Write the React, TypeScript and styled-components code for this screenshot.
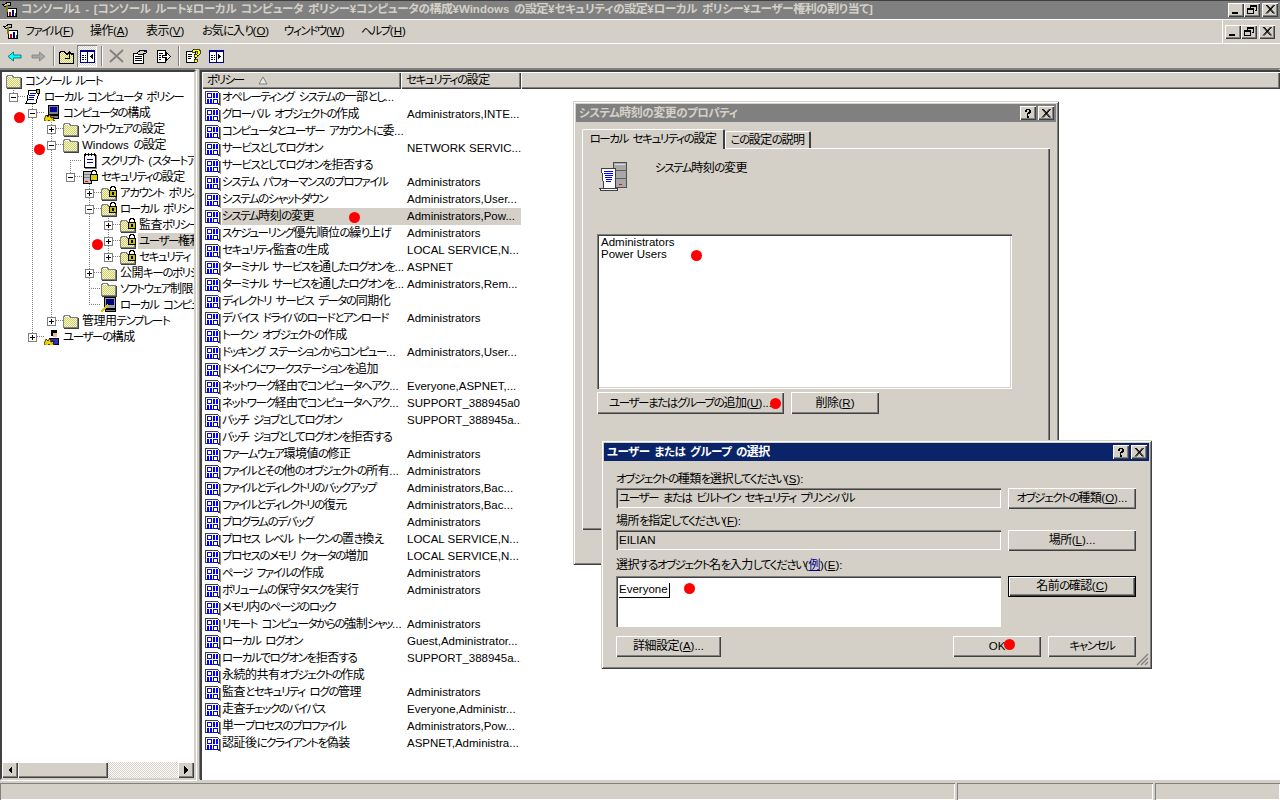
import React from "react";
import styled, { createGlobalStyle, css } from "styled-components";

const Global = createGlobalStyle`
  html, body { margin: 0; padding: 0; background: #d4d0c8; }
  * { box-sizing: border-box; }
  body { font: 11.5px/1 "Liberation Sans", "Noto Sans CJK JP", sans-serif; font-feature-settings: "palt"; color: #000; overflow: hidden; letter-spacing: -1.4px; }
`;

const raised = css`
  box-shadow: inset 1px 1px #fff, inset -1px -1px #404040, inset -2px -2px #808080;
`;
const sunken = css`
  box-shadow: inset 1px 1px #808080, inset -1px -1px #fff;
`;

const Kanji = styled.span`
  font-size: 12px; letter-spacing: -0.5px;
`;
const Latin = styled.span`
  font-size: 11.5px; letter-spacing: 0; white-space: pre; word-spacing: 1.5px;
`;
const T = ({ s }: { s: string }) => (
  <>
    {s.split(/([\u3400-\u9fff々]+|[\x00-\x7f¥]+)/).filter(Boolean).map((p, i) =>
      /^[\u3400-\u9fff々]/.test(p) ? <Kanji key={i}>{p}</Kanji>
        : /^[\x00-\x7f¥]/.test(p) ? <Latin key={i}>{p}</Latin>
          : <React.Fragment key={i}>{p}</React.Fragment>
    )}
  </>
);

const Screen = styled.div`
  position: relative; width: 1280px; height: 800px; display: flex; flex-direction: column;
  background: #d4d0c8; overflow: hidden;
`;
const TitleBar = styled.div`
  height: 19px; flex: none; background: #808080; border-top: 1px solid #404040; display: flex; align-items: center;
  padding: 0 2px 1px 2px; color: #d4d0c8; font-weight: 700; white-space: nowrap; letter-spacing: -.3px;
`;
const TitleText = styled.span`
  margin-left: 3px; flex: 1; overflow: hidden;
`;
const Controls = styled.div`
  display: flex; flex: none; align-items: center;
`;
const CapBtn = styled.div<{ $gap?: number }>`
  width: 16px; height: 14px; background: #d4d0c8; ${raised}; display: flex; align-items: center; justify-content: center;
  margin-left: ${p => p.$gap ?? 0}px;
`;
const MenuBar = styled.div`
  height: 25px; flex: none; display: flex; align-items: center; border-top: 1px solid #fff; border-bottom: 1px solid #fff; padding-left: 3px; padding-right: 5px;
`;
const MenuItems = styled.div`
  flex: 1; display: flex; align-items: center; height: 100%; border-right: 1px solid #fff; margin-right: 2px; padding-left: 6px;
`;
const MenuItem = styled.span<{ $w: number }>`
  width: ${p => p.$w}px; white-space: nowrap; flex: none;
`;
const Acc = styled.span`
  text-decoration: underline; letter-spacing: 0;
`;
const ToolBar = styled.div`
  height: 25px; flex: none; display: flex; align-items: center; padding-left: 4px; border-bottom: 1px solid #808080;
`;
const Tool = styled.div<{ $pressed?: boolean; $gap?: number }>`
  width: 20px; height: 22px; display: flex; align-items: center; justify-content: center; flex: none; margin-left: ${p => p.$gap ?? 0}px;
  ${p => p.$pressed && css`
    background: repeating-conic-gradient(#fff 0 25%, #d4d0c8 0 50%) 0 0 / 2px 2px;
    box-shadow: inset 1px 1px #808080, inset -1px -1px #fff;
  `}
`;
const ToolSep = styled.div<{ $l: number; $r: number }>`
  width: 2px; height: 20px; flex: none; margin: 0 ${p => p.$r}px 0 ${p => p.$l}px; border-left: 1px solid #808080; border-right: 1px solid #fff;
`;
const Panes = styled.div`
  flex: 1; min-height: 0; display: flex; gap: 4px; padding-top: 1px;
`;
const TreePane = styled.div`
  position: relative; width: 196px; flex: none; display: flex; flex-direction: column; background: #fff;
  border-top: 2px solid #404040; border-left: 2px solid #404040; border-right: 2px solid #d4d0c8; border-bottom: 2px solid #d4d0c8;
  box-shadow: 1px 1px #fff, -1px -1px #808080;
`;
const TreeBody = styled.div`
  position: relative; flex: 1; min-height: 0; overflow: hidden; padding-top: 1px;
`;
const TreeLines = styled.svg`
  position: absolute; left: 0; top: 0; pointer-events: none;
`;
const TreeRow = styled.div<{ $pad: number }>`
  position: relative; height: 16px; display: flex; align-items: center; padding-left: ${p => p.$pad}px; white-space: nowrap;
`;
const Expander = styled.div<{ $hidden?: boolean }>`
  width: 9px; height: 9px; flex: none; margin-right: 7px; visibility: ${p => (p.$hidden ? "hidden" : "visible")};
  border: 1px solid #808080; background: #fff; display: flex; align-items: center; justify-content: center;
`;
const TreeLabel = styled.span<{ $selected?: boolean }>`
  margin-left: 2px; padding: 2px 1px; flex: 1; line-height: 12px; overflow: hidden;
  background: ${p => (p.$selected ? "#d4d0c8" : "transparent")};
`;
const HScroll = styled.div`
  height: 16px; flex: none; display: flex; background: repeating-conic-gradient(#fff 0 25%, #d4d0c8 0 50%) 0 0 / 2px 2px;
`;
const ScrollBtn = styled.div`
  width: 16px; flex: none; background: #d4d0c8; ${raised}; display: flex; align-items: center; justify-content: center;
`;
const ScrollThumb = styled.div`
  width: 90px; flex: none; background: #d4d0c8; ${raised}; margin-right: auto;
`;
const ListPane = styled.div`
  flex: 1; min-width: 0; background: #fff; border-top: 2px solid #404040; border-left: 2px solid #404040; box-shadow: -1px -1px #808080;
  overflow: hidden;
`;
const Header = styled.div`
  display: flex; height: 17px; background: #d4d0c8;
`;
const HeadCell = styled.div<{ $w?: number }>`
  ${p => (p.$w ? `width:${p.$w}px;flex:none;` : "flex:1;")}
  ${raised}; padding-left: 5px; display: flex; align-items: center; white-space: nowrap;
`;
const SortMark = styled.svg`
  margin-left: 14px;
`;
const ListRow = styled.div`
  height: 17px; display: flex; align-items: center; padding-left: 3px;
`;
const ListBody = styled.div<{ $selected?: boolean }>`
  margin-left: 1px; width: 299px; height: 17px; display: grid; grid-template-columns: 179px 120px; align-items: center; white-space: nowrap;
  background: ${p => (p.$selected ? "#d4d0c8" : "transparent")};
`;
const Cell2 = styled.span`
  padding-left: 6px; letter-spacing: 0; overflow: hidden;
`;
const NameCell = styled.span`
  overflow: visible;
`;
const StatusBar = styled.div`
  height: 20px; flex: none; display: flex; gap: 2px; padding-top: 3px;
`;
const StatusCell = styled.div<{ $w?: number }>`
  ${p => (p.$w ? `width:${p.$w}px;flex:none;` : "flex:1;")}
  ${sunken};
`;

const Win = styled.div<{ $x: number; $y: number; $w: number; $h: number }>`
  position: absolute; left: ${p => p.$x}px; top: ${p => p.$y}px; width: ${p => p.$w}px; height: ${p => p.$h}px;
  background: #d4d0c8; padding: 3px; display: flex; flex-direction: column;
  box-shadow: inset 1px 1px #d4d0c8, inset -1px -1px #404040, inset 2px 2px #fff, inset -2px -2px #808080;
`;
const WinTitle = styled.div<{ $active?: boolean }>`
  height: 18px; flex: none; display: flex; align-items: center; padding: 0 2px 0 3px; font-weight: 700; white-space: nowrap; letter-spacing: -.5px;
  background: ${p => (p.$active ? "#0a246a" : "#808080")}; color: ${p => (p.$active ? "#fff" : "#d4d0c8")};
`;
const WinTitleText = styled.span`
  flex: 1;
`;
const TabStrip = styled.div`
  display: flex; align-items: flex-end; height: 23px; flex: none; margin: 3px 0 0 6px;
`;
const Tab = styled.div<{ $active?: boolean; $w: number }>`
  width: ${p => p.$w}px; height: ${p => (p.$active ? 20 : 17)}px; display: flex; align-items: center; justify-content: center; position: relative; z-index: ${p => (p.$active ? 1 : 0)};
  background: #d4d0c8; border-top: 1px solid #fff; border-left: 1px solid #fff; border-right: 2px solid #404040; border-top-left-radius: 2px; border-top-right-radius: 2px;
  ${p => p.$active && "margin-bottom:-1px;"}
  white-space: nowrap;
`;
const TabPanel = styled.div`
  width: 468px; height: 382px; flex: none; margin-left: 6px; padding: 12px 15px; ${raised};
  display: flex; flex-direction: column;
`;
const PolicyHead = styled.div`
  height: 74px; flex: none; display: flex; align-items: flex-start; padding-left: 1px; gap: 25px;
`;
const PolicyName = styled.span`
  margin-top: 2px;
`;
const ListBox = styled.div`
  width: 415px; height: 155px; flex: none; background: #fff; padding: 2px 4px; letter-spacing: 0; line-height: 12px;
  box-shadow: inset 1px 1px #808080, inset 2px 2px #404040, inset -1px -1px #fff, inset -2px -2px #d4d0c8;
`;
const BtnRow = styled.div`
  display: flex; gap: 7px; margin-top: 3px;
`;
const Btn = styled.div<{ $w: number; $h?: number; $default?: boolean }>`
  width: ${p => p.$w}px; height: ${p => p.$h ?? 21}px; flex: none; display: flex; align-items: center; justify-content: center; white-space: pre; background: #d4d0c8;
  ${raised};
  ${p => p.$default && css`
    border: 1px solid #000;
  `}
`;
const Form = styled.div`
  flex: 1; display: grid; grid-template-columns: 385px 128px; column-gap: 7px; padding: 10px 0 0 12px; align-content: start;
`;
const FieldLabel = styled.label<{ $h?: number }>`
  grid-column: 1 / 3; height: ${p => p.$h ?? 17}px; display: flex; align-items: center; white-space: pre;
`;
const Field = styled.div<{ $h?: number; $white?: boolean }>`
  height: ${p => p.$h ?? 20}px; background: ${p => (p.$white ? "#fff" : "#d4d0c8")}; padding: 5px 3px 3px; white-space: pre;
  box-shadow: inset 1px 1px #808080, inset 2px 2px #404040, inset -1px -1px #fff;
  margin-bottom: 5px;
`;
const Typed = styled.span`
  display: inline-block; margin-top: 2px; padding: 1px 1px 1px 0; border-bottom: 1px solid #000; border-right: 1px solid #000; letter-spacing: 0;
`;
const LinkText = styled.span`
  color: #000080; text-decoration: underline;
`;
const WinFooter = styled.div`
  display: flex; grid-column: 1 / 3; margin-top: 4px; gap: 7px;
`;
const Spacer = styled.div`
  flex: 1;
`;
const Grip = styled.svg`
  position: absolute; right: 3px; bottom: 3px;
`;
const Dot = styled.div<{ $x: number; $y: number }>`
  position: absolute; left: ${p => p.$x - 5.5}px; top: ${p => p.$y - 5.5}px; width: 11px; height: 11px; border-radius: 50%; background: #f00; z-index: 5;
`;
const Defs = styled.svg`
  position: absolute; width: 0; height: 0;
`;

type SP = React.SVGProps<SVGSVGElement>;
const Ic = ({ w = 16, h = 16, children, ...r }: SP & { w?: number; h?: number }) => (
  <svg width={w} height={h} viewBox={`0 0 ${w} ${h}`} shapeRendering="crispEdges" style={{ flex: "none", display: "block" }} {...r}>{children}</svg>
);

const FolderIc = () => (
  <Ic>
    <path d="M.5 3.5h1v-1h5v1h1v1h7v10H.5z" fill="url(#dither)" stroke="#808080" />
    <path d="M15.5 5v10.5H1" fill="none" stroke="#404040" />
    <path d="M2 3.5h4" stroke="#fff" />
  </Ic>
);
const LockFolderIc = () => (
  <Ic>
    <path d="M.5 4.5h1v-1h5v1h1v1h7v9H.5z" fill="url(#dither)" stroke="#808080" />
    <path d="M15.5 6v9.5H1" fill="none" stroke="#404040" />
    <path d="M9.5 5V2.5h1v-1h3v1h1V5" fill="none" stroke="#000" />
    <rect x="8.5" y="5.5" width="7" height="6" fill="#c8c000" stroke="#000" />
    <rect x="11" y="7" width="2" height="3" fill="#000" />
  </Ic>
);
const PolicyIc = () => (
  <Ic>
    <path d="M.5 1.5h12l2 2v11l-2-1H.5z" fill="#fff" stroke="#404040" />
    <path d="M15.5 3v13H13" fill="none" stroke="#909090" />
    <path fill="#0000ff" d="M2 3h5v5H2zM8 3h2v5H8zM11 3h2v5h-2zM2 9h2v5H2zM5 9h2v5H5zM8 9h5v5H8z" />
    <path fill="#fff" d="M3 4h3v3H3zM9 10h3v3H9z" />
  </Ic>
);
const RootPolicyIc = () => (
  <Ic>
    <path d="M4 1h9l1 2-3 11H1l1-2z" fill="#fff" stroke="#000" />
    <path d="M5 4h6M4 6h6M4 8h5M3 10h6" stroke="#0000c0" />
    <path d="M11 0h3v4h-2z" fill="#c0c000" stroke="#000" />
  </Ic>
);
const ComputerIc = () => (
  <Ic>
    <rect x="4.5" y=".5" width="10" height="9" fill="#808080" stroke="#000" />
    <rect x="6" y="2" width="7" height="5" fill="#0000a0" />
    <rect x="3.5" y="10.5" width="11" height="3" fill="#808080" stroke="#000" />
    <path d="M0 15l2-5 2 2 2-3 1 4 3-1-1 3 2 1-5 1-1-2-2 2z" fill="#f0d000" stroke="#000" strokeWidth=".7" shapeRendering="auto" />
  </Ic>
);
const UserIc = () => (
  <Ic>
    <circle cx="10" cy="4" r="3.5" fill="#000" />
    <rect x="9" y="4" width="4" height="4" fill="#e8b890" />
    <path d="M5.5 15.5v-6h9v6z" fill="#3030c0" stroke="#000" />
    <path d="M0 15l2-5 2 2 2-3 1 4 3-1-1 3 2 1-5 1-1-2-2 2z" fill="#f0d000" stroke="#000" strokeWidth=".7" shapeRendering="auto" />
  </Ic>
);
const ScriptIc = () => (
  <Ic>
    <path d="M2.5 1.5h11v13h-11z" fill="#fff" stroke="#000" />
    <path d="M3 0v3M6 0v3M9 0v3M12 0v3" stroke="#000" />
    <path d="M5 6h6M5 9h6" stroke="#0000c0" />
    <path d="M14.5 2v13.5H3" fill="none" stroke="#808080" />
  </Ic>
);
const SecurityIc = () => (
  <Ic>
    <rect x="1.5" y="2.5" width="8" height="12" fill="#c0c0c0" stroke="#000" />
    <path d="M2 5h7M2 8h7" stroke="#808080" />
    <rect x="3" y="12" width="3" height="1" fill="#f00" />
    <path d="M9.5 5V2.5h1v-1h3v1h1V5" fill="none" stroke="#000" />
    <rect x="8.5" y="5.5" width="7" height="6" fill="#e0d000" stroke="#000" />
  </Ic>
);
const LocalPcIc = () => (
  <Ic>
    <rect x="3.5" y=".5" width="11" height="11" fill="#a0a0a0" stroke="#000" />
    <rect x="5" y="2" width="8" height="6" fill="#000080" />
    <rect x="4.5" y="12.5" width="10" height="2" fill="#808080" stroke="#000" />
    <path d="M0 15l7-7" stroke="#e0c000" strokeWidth="2" />
  </Ic>
);
const MmcIc = () => (
  <Ic>
    <rect x="5.5" y="6.5" width="9" height="8" fill="#fff" stroke="#000" />
    <rect x="7" y="10" width="2" height="4" fill="#c00000" />
    <rect x="10" y="8" width="2" height="6" fill="#000080" />
    <rect x="13" y="11" width="1" height="3" fill="#008000" />
    <path d="M0 2h3l3-2h2v3H5l-2 2z" fill="#c0c0c0" stroke="#000" />
    <path d="M5 3v7" stroke="#808000" strokeWidth="2" />
  </Ic>
);
const Plus = ({ open }: { open?: boolean }) => (
  <Ic w={7} h={7}>
    <path d="M1 3.5h5" stroke="#000" />
    {!open && <path d="M3.5 1v5" stroke="#000" />}
  </Ic>
);
const MinGlyph = () => <Ic w={10} h={9}><rect x="1" y="7" width="6" height="2" fill="#000" /></Ic>;
const RestoreGlyph = () => (
  <Ic w={10} h={9}>
    <path d="M3.5 2.5V.5h6v5H7.5" fill="none" stroke="#000" />
    <path d="M3 1h7" stroke="#000" />
    <rect x=".5" y="3.5" width="6" height="5" fill="none" stroke="#000" />
    <path d="M0 4h7" stroke="#000" />
  </Ic>
);
const CloseGlyph = () => (
  <Ic w={10} h={9}>
    <path d="M1 0l7.5 8.5M2.2 0l7.5 8.5M8.5 0L1 8.5M9.7 0L2.2 8.5" stroke="#000" shapeRendering="auto" />
  </Ic>
);
const HelpGlyph = () => (
  <Ic w={8} h={9}>
    <path d="M1 2V1h1V0h4v1h1v3H6v1H4v2H3V4h1V3h1V1H3v2H1zM3 7h2v2H3z" fill="#000" />
  </Ic>
);
const Arrow = ({ left }: { left?: boolean }) => (
  <Ic w={6} h={8}><path d={left ? "M5 0v8L1 4z" : "M1 0v8l4-4z"} fill="#000" /></Ic>
);
const BackIc = ({ dir, color, line }: { dir: 1 | -1; color: string; line: string }) => (
  <Ic w={15} h={11}>
    <g transform={dir < 0 ? "translate(15 0) scale(-1 1)" : undefined}>
      <path d="M1 5.5L6.5 1v3h7.5v3H6.5v3z" fill={color} stroke={line} strokeWidth=".8" shapeRendering="auto" />
    </g>
  </Ic>
);
const UpIc = () => (
  <Ic w={16} h={15}>
    <path d="M.5 3.5h1v-1h4v1h1v1h8v10H.5z" fill="url(#dither)" stroke="#000" />
    <path d="M7.5 6l3-3 3 3M10.5 3v6H6" fill="none" stroke="#000" />
  </Ic>
);
const PanelIc = ({ right }: { right?: boolean }) => (
  <Ic w={15} h={13}>
    <rect x=".5" y=".5" width="14" height="12" fill="#fff" stroke="#000080" />
    <rect x="0" y="0" width="15" height="2" fill="#000080" />
    <path d="M7.5 1v11" stroke="#000080" />
    {right
      ? <><path d="M2 5h4M2 7h4M2 9h4" stroke="#000" strokeDasharray="2 1" /><path d="M9 4l3 2.5L9 9z" fill="#000" /></>
      : <><path d="M2 5h4M2 7h4M2 9h4" stroke="#000" strokeDasharray="2 1" /><path d="M13 4l-3 2.5L13 9z" fill="#000" /></>}
  </Ic>
);
const DelIc = () => (
  <Ic w={15} h={14}><path d="M1 1l13 12M14 1L1 13" stroke="#808080" strokeWidth="1.8" shapeRendering="auto" /></Ic>
);
const PropsIc = () => (
  <Ic w={16} h={15}>
    <path d="M1.5 4.5h10v10h-10z" fill="#fff" stroke="#000" />
    <path d="M3 7h7M3 9h7M3 11h7" stroke="#000" />
    <path d="M5 4l4-3h3v2l2-1v2l-3 1H6z" fill="#d4d0c8" stroke="#000" />
    <rect x="13" y="1" width="2" height="2" fill="#000080" />
  </Ic>
);
const ExportIc = () => (
  <Ic w={16} h={15}>
    <path d="M1.5 1.5h8v12h-8z" fill="#fff" stroke="#000" />
    <path d="M3 4h4M3 6h2M3 8h2M3 10h2" stroke="#000" />
    <path d="M6.5 6.5h4v-3l4 4-4 4v-3h-4z" fill="#fff" stroke="#000" />
  </Ic>
);
const HelpIc = () => (
  <Ic w={16} h={16}>
    <path d="M1.5 3.5h9v11h-9z" fill="#fff" stroke="#000" />
    <path d="M3 6h4M3 8h4M3 10h3" stroke="#000" />
    <path d="M7 4V2h1V1h6v1h1v4h-1v1h-2v2H9V6h3V3h-2v1zM9 11h3v3H9z" fill="#ffff00" stroke="#000" strokeWidth=".7" />
  </Ic>
);
const ServerDocIc = () => (
  <Ic w={32} h={32}>
    <rect x="15.5" y="2.5" width="13" height="25" fill="#a8a8a8" stroke="#505050" />
    <path d="M15 10h14M15 18h14" stroke="#606060" />
    <path d="M17 4h10" stroke="#e0e0e0" />
    <rect x="21" y="24" width="3" height="1" fill="#f00" />
    <path d="M3.5 8.5h14v20H6z" fill="#fff" stroke="#404040" />
    <path d="M6 11h9M6 13h9M7 15h8M7 17h7M8 19h6M8 21h5" stroke="#0000e0" />
    <path d="M1.5 28.5h18v2H3z" fill="#fff" stroke="#404040" />
  </Ic>
);

type TR = { t: string; l: number; ex?: "p" | "m"; ic: React.ReactNode; sel?: boolean };
const tree: TR[] = [
  { t: "コンソール ルート", l: 0, ic: <FolderIc /> },
  { t: "ローカル コンピュータ ポリシー", l: 1, ex: "m", ic: <RootPolicyIc /> },
  { t: "コンピュータの構成", l: 2, ex: "m", ic: <ComputerIc /> },
  { t: "ソフトウェアの設定", l: 3, ex: "p", ic: <FolderIc /> },
  { t: "Windows の設定", l: 3, ex: "m", ic: <FolderIc /> },
  { t: "スクリプト (スタートアップ/シャットダウン)", l: 4, ic: <ScriptIc /> },
  { t: "セキュリティの設定", l: 4, ex: "m", ic: <SecurityIc /> },
  { t: "アカウント ポリシー", l: 5, ex: "p", ic: <LockFolderIc /> },
  { t: "ローカル ポリシー", l: 5, ex: "m", ic: <LockFolderIc /> },
  { t: "監査ポリシー", l: 6, ex: "p", ic: <LockFolderIc /> },
  { t: "ユーザー権利の割り当て", l: 6, ex: "p", ic: <LockFolderIc />, sel: true },
  { t: "セキュリティ オプション", l: 6, ex: "p", ic: <LockFolderIc /> },
  { t: "公開キーのポリシー", l: 5, ex: "p", ic: <FolderIc /> },
  { t: "ソフトウェア制限のポリシー", l: 5, ic: <FolderIc /> },
  { t: "ローカル コンピュータ上の IP セキュリティ", l: 5, ic: <LocalPcIc /> },
  { t: "管理用テンプレート", l: 3, ex: "p", ic: <FolderIc /> },
  { t: "ユーザーの構成", l: 2, ex: "p", ic: <UserIc /> },
];
const A = "Administrators";
const policies: [string, string][] = [
  ["オペレーティング システムの一部とし...", ""],
  ["グローバル オブジェクトの作成", "Administrators,INTE..."],
  ["コンピュータとユーザー アカウントに委...", ""],
  ["サービスとしてログオン", "NETWORK SERVIC..."],
  ["サービスとしてログオンを拒否する", ""],
  ["システム パフォーマンスのプロファイル", A],
  ["システムのシャットダウン", "Administrators,User..."],
  ["システム時刻の変更", "Administrators,Pow..."],
  ["スケジューリング優先順位の繰り上げ", A],
  ["セキュリティ監査の生成", "LOCAL SERVICE,N..."],
  ["ターミナル サービスを通したログオンを...", "ASPNET"],
  ["ターミナル サービスを通したログオンを...", "Administrators,Rem..."],
  ["ディレクトリ サービス データの同期化", ""],
  ["デバイス ドライバのロードとアンロード", A],
  ["トークン オブジェクトの作成", ""],
  ["ドッキング ステーションからコンピュー...", "Administrators,User..."],
  ["ドメインにワークステーションを追加", ""],
  ["ネットワーク経由でコンピュータへアク...", "Everyone,ASPNET,..."],
  ["ネットワーク経由でコンピュータへアク...", "SUPPORT_388945a0"],
  ["バッチ ジョブとしてログオン", "SUPPORT_388945a..."],
  ["バッチ ジョブとしてログオンを拒否する", ""],
  ["ファームウェア環境値の修正", A],
  ["ファイルとその他のオブジェクトの所有...", A],
  ["ファイルとディレクトリのバックアップ", "Administrators,Bac..."],
  ["ファイルとディレクトリの復元", "Administrators,Bac..."],
  ["プログラムのデバッグ", A],
  ["プロセス レベル トークンの置き換え", "LOCAL SERVICE,N..."],
  ["プロセスのメモリ クォータの増加", "LOCAL SERVICE,N..."],
  ["ページ ファイルの作成", A],
  ["ボリュームの保守タスクを実行", A],
  ["メモリ内のページのロック", ""],
  ["リモート コンピュータからの強制シャッ...", A],
  ["ローカル ログオン", "Guest,Administrator..."],
  ["ローカルでログオンを拒否する", "SUPPORT_388945a..."],
  ["永続的共有オブジェクトの作成", ""],
  ["監査とセキュリティ ログの管理", A],
  ["走査チェックのバイパス", "Everyone,Administr..."],
  ["単一プロセスのプロファイル", "Administrators,Pow..."],
  ["認証後にクライアントを偽装", "ASPNET,Administra..."],
];
const menus: [string, string, number][] = [
  ["ファイル", "F", 65], ["操作", "A", 56], ["表示", "V", 56], ["お気に入り", "O", 82], ["ウィンドウ", "W", 77], ["ヘルプ", "H", 70],
];
const dots: [number, number][] = [[19, 117], [39, 149], [97, 244], [354, 217], [696, 255], [775, 403], [689, 588], [1009, 644]];

const cx = (l: number) => 11 + 19 * (l - 1);
const TreeConnectors = () => {
  const segs: string[] = [];
  const vs: [number, number, number][] = [[1, 12, 24], [2, 24, 264], [3, 40, 248], [4, 88, 104], [5, 104, 232], [6, 136, 184]];
  vs.forEach(([l, a, b]) => segs.push(`M${cx(l) + .5} ${a}V${b}`));
  tree.forEach((r, i) => {
    if (r.l === 0) return;
    const y = 8 + 16 * i + .5;
    segs.push(`M${cx(r.l) + (r.ex ? 5 : 0)} ${y}H${cx(r.l) + 12}`);
  });
  return (
    <TreeLines width="192" height="340">
      <path d={segs.join("")} stroke="#808080" strokeDasharray="1 1" fill="none" shapeRendering="crispEdges" />
    </TreeLines>
  );
};

export default function App() {
  return (
    <Screen>
      <Global />
      <Defs>
        <defs>
          <pattern id="dither" width="2" height="2" patternUnits="userSpaceOnUse">
            <rect width="2" height="2" fill="#ffff99" />
            <rect width="1" height="1" fill="#c8c8a0" />
            <rect x="1" y="1" width="1" height="1" fill="#c8c8a0" />
          </pattern>
        </defs>
      </Defs>
      <TitleBar>
        <MmcIc />
        <TitleText><T s="コンソール1 - [コンソール ルート¥ローカル コンピュータ ポリシー¥コンピュータの構成¥Windows の設定¥セキュリティの設定¥ローカル ポリシー¥ユーザー権利の割り当て]" /></TitleText>
        <Controls>
          <CapBtn><MinGlyph /></CapBtn>
          <CapBtn><RestoreGlyph /></CapBtn>
          <CapBtn $gap={2}><CloseGlyph /></CapBtn>
        </Controls>
      </TitleBar>
      <MenuBar>
        <MmcIc />
        <MenuItems>
          {menus.map(([t, k, w]) => (
            <MenuItem key={t} $w={w}><T s={t} /><Latin>(<Acc>{k}</Acc>)</Latin></MenuItem>
          ))}
        </MenuItems>
        <Controls>
          <CapBtn><MinGlyph /></CapBtn>
          <CapBtn><RestoreGlyph /></CapBtn>
          <CapBtn $gap={2}><CloseGlyph /></CapBtn>
        </Controls>
      </MenuBar>
      <ToolBar>
        <Tool><BackIc dir={1} color="#00ffff" line="#006060" /></Tool>
        <Tool $gap={4}><BackIc dir={-1} color="#a8a8a8" line="#808080" /></Tool>
        <ToolSep $l={5} $r={2} />
        <Tool><UpIc /></Tool>
        <Tool $pressed><PanelIc /></Tool>
        <ToolSep $l={4} $r={3} />
        <Tool><DelIc /></Tool>
        <Tool $gap={4}><PropsIc /></Tool>
        <Tool $gap={4}><ExportIc /></Tool>
        <ToolSep $l={4} $r={3} />
        <Tool><HelpIc /></Tool>
        <Tool $gap={3}><PanelIc right /></Tool>
      </ToolBar>
      <Panes>
        <TreePane>
          <TreeBody>
            <TreeConnectors />
            {tree.map(r => (
              <TreeRow key={r.t} $pad={r.l ? cx(r.l) - 4 : 4}>
                {r.l > 0 && (
                  <Expander $hidden={!r.ex}><Plus open={r.ex === "m"} /></Expander>
                )}
                {r.ic}
                <TreeLabel $selected={r.sel}><T s={r.t} /></TreeLabel>
              </TreeRow>
            ))}
          </TreeBody>
          <HScroll>
            <ScrollBtn><Arrow left /></ScrollBtn>
            <ScrollThumb />
            <ScrollBtn><Arrow /></ScrollBtn>
          </HScroll>
        </TreePane>
        <ListPane>
          <Header>
            <HeadCell $w={199}>
              <T s="ポリシー" />
              <SortMark width="10" height="9" viewBox="0 0 10 9"><path d="M5 1L1 8h8z" fill="#e8e8e8" stroke="#808080" /></SortMark>
            </HeadCell>
            <HeadCell $w={120}><span><T s="セキュリティの設定" /></span></HeadCell>
            <HeadCell />
          </Header>
          {policies.map(([n, v], i) => (
            <ListRow key={i}>
              <PolicyIc />
              <ListBody $selected={i === 7}>
                <NameCell><T s={n} /></NameCell>
                <Cell2>{v}</Cell2>
              </ListBody>
            </ListRow>
          ))}
        </ListPane>
      </Panes>
      <StatusBar>
        <StatusCell />
        <StatusCell $w={196} />
        <StatusCell $w={125} />
      </StatusBar>

      <Win $x={573} $y={101} $w={486} $h={464}>
        <WinTitle>
          <WinTitleText><T s="システム時刻の変更のプロパティ" /></WinTitleText>
          <CapBtn><HelpGlyph /></CapBtn>
          <CapBtn $gap={2}><CloseGlyph /></CapBtn>
        </WinTitle>
        <TabStrip>
          <Tab $active $w={143}><span><T s="ローカル セキュリティの設定" /></span></Tab>
          <Tab $w={86}><span><T s="この設定の説明" /></span></Tab>
        </TabStrip>
        <TabPanel>
          <PolicyHead>
            <ServerDocIc />
            <PolicyName><T s="システム時刻の変更" /></PolicyName>
          </PolicyHead>
          <ListBox>Administrators<br />Power Users</ListBox>
          <BtnRow>
            <Btn $w={187} $h={22}><span><T s="ユーザーまたはグループの追加" /><Latin>(<Acc>U</Acc>)...</Latin></span></Btn>
            <Btn $w={88} $h={22}><span><T s="削除" /><Latin>(<Acc>R</Acc>)</Latin></span></Btn>
          </BtnRow>
        </TabPanel>
      </Win>

      <Win $x={601} $y={440} $w={551} $h={229}>
        <WinTitle $active>
          <WinTitleText><T s="ユーザー または グループ の選択" /></WinTitleText>
          <CapBtn><HelpGlyph /></CapBtn>
          <CapBtn $gap={2}><CloseGlyph /></CapBtn>
        </WinTitle>
        <Form>
          <FieldLabel><span><T s="オブジェクトの種類を選択してください" /><Latin>(<Acc>S</Acc>):</Latin></span></FieldLabel>
          <Field><T s="ユーザー または ビルトイン セキュリティ プリンシパル" /></Field>
          <Btn $w={128} $h={21}><span><T s="オブジェクトの種類" /><Latin>(<Acc>O</Acc>)...</Latin></span></Btn>
          <FieldLabel><span><T s="場所を指定してください" /><Latin>(<Acc>F</Acc>):</Latin></span></FieldLabel>
          <Field><Latin>EILIAN</Latin></Field>
          <Btn $w={128} $h={21}><span><T s="場所" /><Latin>(<Acc>L</Acc>)...</Latin></span></Btn>
          <FieldLabel $h={21}><span><T s="選択するオブジェクト名を入力してください" /><Latin>(<LinkText><T s="例" /></LinkText>)(<Acc>E</Acc>):</Latin></span></FieldLabel>
          <Field $h={51} $white><Typed>Everyone</Typed></Field>
          <Btn $w={128} $h={21} $default><span><T s="名前の確認" /><Latin>(<Acc>C</Acc>)</Latin></span></Btn>
          <WinFooter>
            <Btn $w={105}><span><T s="詳細設定" /><Latin>(<Acc>A</Acc>)...</Latin></span></Btn>
            <Spacer />
            <Btn $w={88}><Latin>OK</Latin></Btn>
            <Btn $w={88}><span><T s="キャンセル" /></span></Btn>
          </WinFooter>
        </Form>
        <Grip width="13" height="13" viewBox="0 0 13 13"><path d="M12 1L1 12M12 5L5 12M12 9L9 12" stroke="#808080" strokeWidth="1.4" /></Grip>
      </Win>

      {dots.map(([x, y]) => <Dot key={x} $x={x} $y={y} />)}
    </Screen>
  );
}
